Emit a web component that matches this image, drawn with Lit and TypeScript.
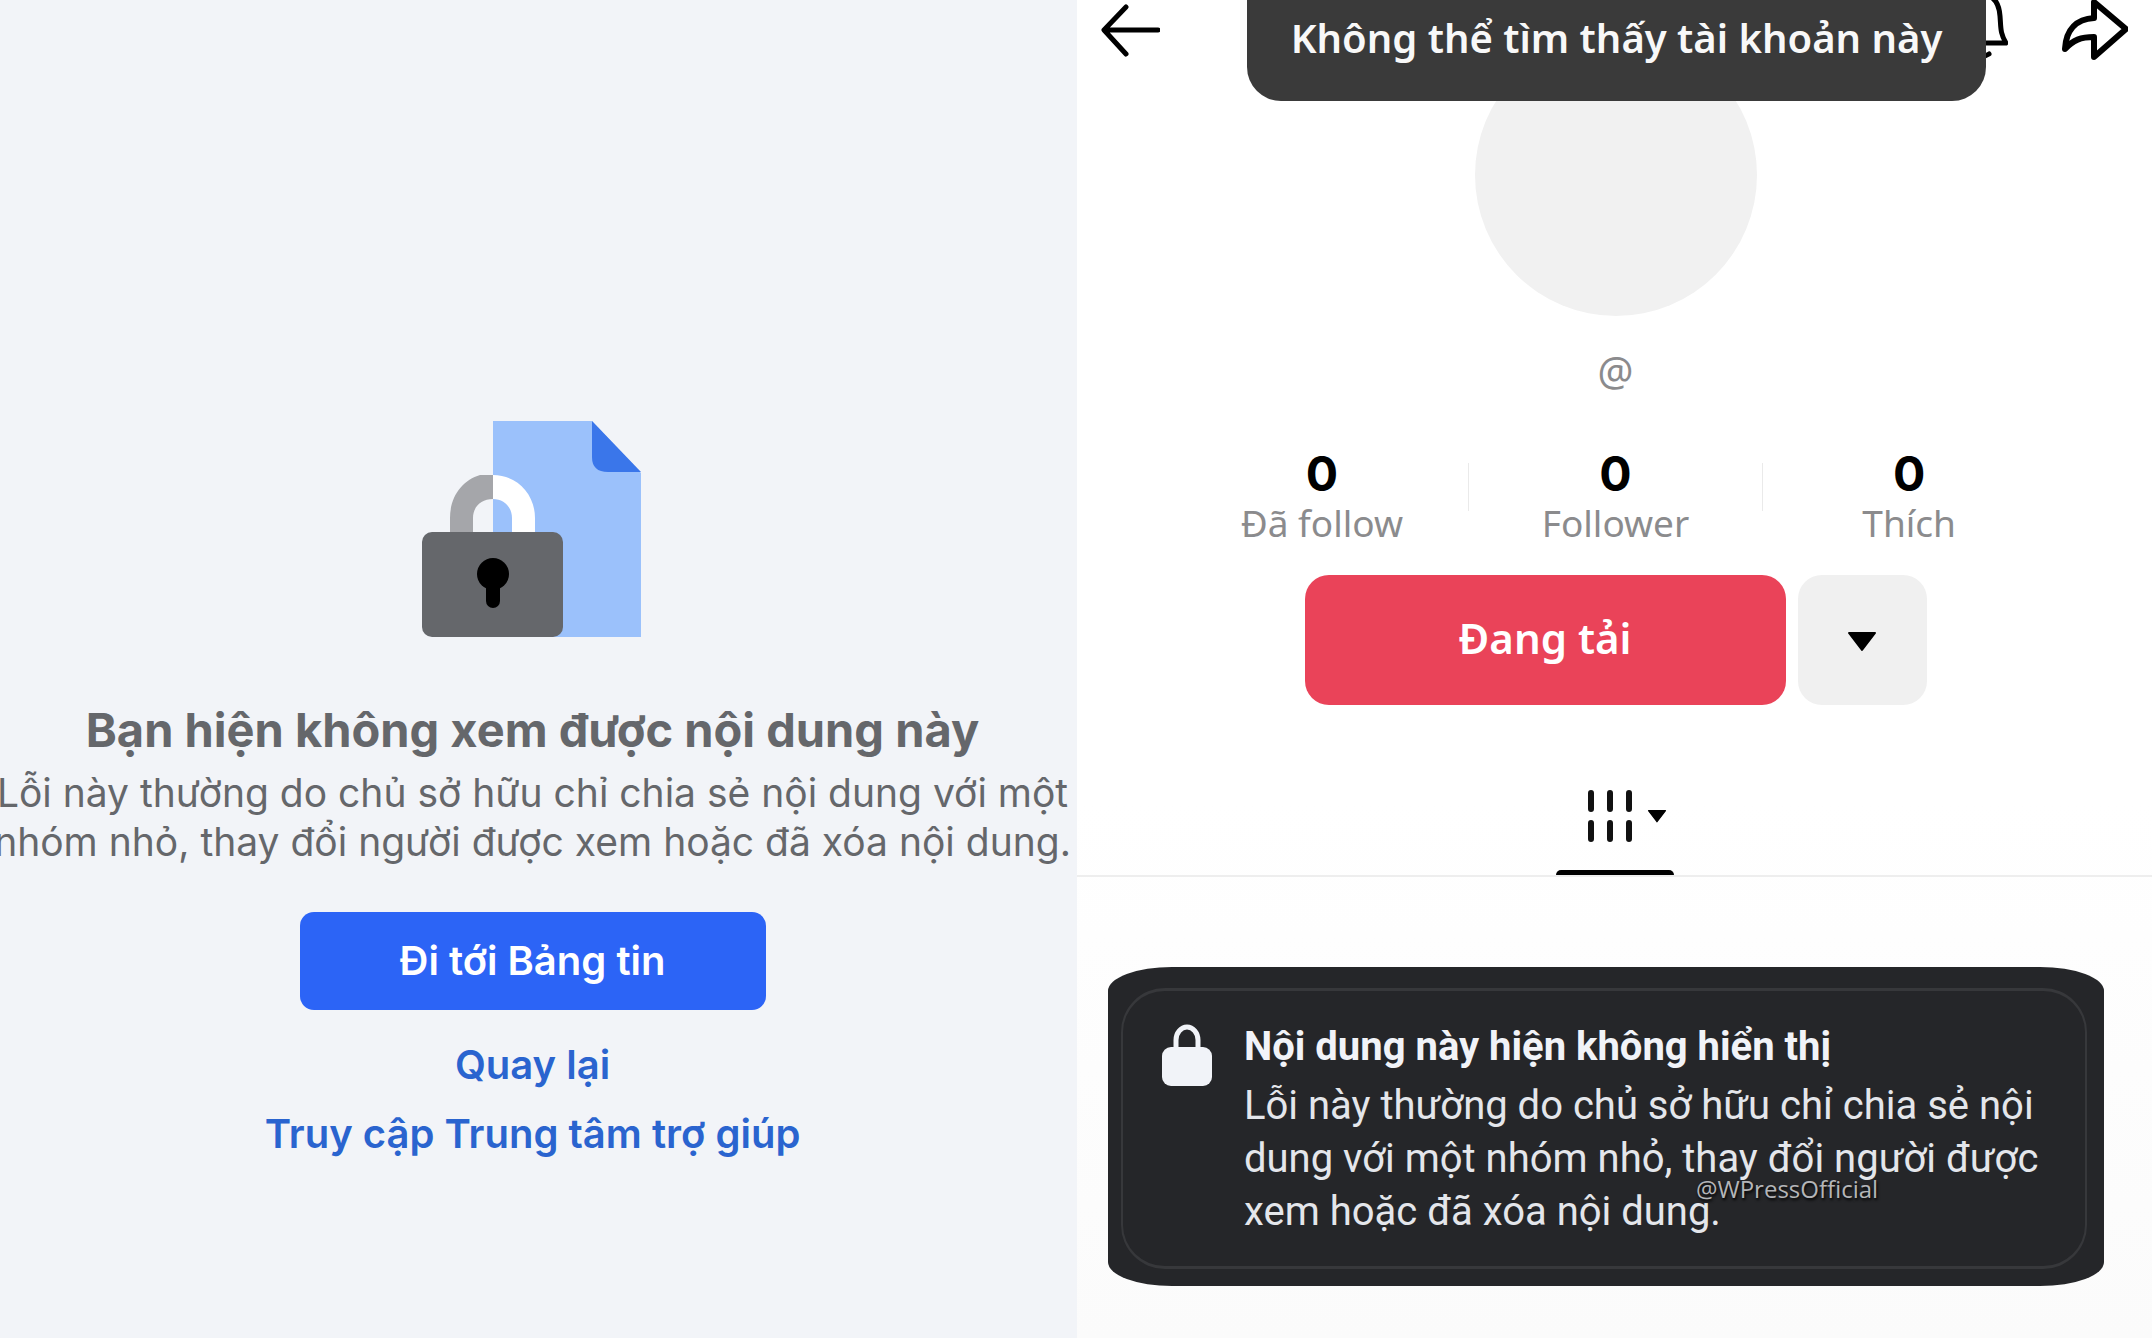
import { LitElement, html, css, svg } from "lit";
import { customElement, property } from "lit/decorators.js";

@customElement("blocked-content")
class BlockedContent extends LitElement {
  static styles = css`
    :host {
      display: flex;
      flex-direction: column;
      align-items: center;
      box-sizing: border-box;
      min-width: 0;
      padding: 420px 12px 0 0;
      overflow: hidden;
      background: #f2f4f8;
      color: #65676b;
      font-family: Inter, "Liberation Sans", sans-serif;
    }
    .art { display: block; width: 220px; height: 218px; margin-right: 4px; }
    h1 { margin: 64px 0 0; font-size: 47px; line-height: 56px; font-weight: 700; white-space: nowrap; }
    p { margin: 10px 0 0; font-size: 39px; line-height: 49px; white-space: nowrap; text-align: center; }
    .primary {
      width: 466px;
      height: 98px;
      margin-top: 46px;
      padding: 0;
      border: 0;
      border-radius: 14px;
      background: #2c64f6;
      color: #fff;
      font: 600 40px/48px Inter, "Liberation Sans", sans-serif;
    }
    nav { display: flex; flex-direction: column; align-items: center; gap: 20px; margin-top: 30px; }
    a { color: #2a64cf; font-size: 40px; line-height: 49px; font-weight: 600; text-decoration: none; white-space: nowrap; }
  `;
  render() {
    return html`
      <svg class="art" viewBox="0 0 220 218" aria-hidden="true">
        <path d="M72 1h99l49 52v164H72z" fill="#9bc1fb" />
        <path d="M171 1v36q0 15 16 15h33z" fill="#3a76ea" />
        <path d="M29 114V98C29 76 42 60 59 55h13v24C60 79 52 87 52 98v16z" fill="#a5a6aa" />
        <path d="M72 55c24 0 42 19 42 43v16H91V98c0-11-8-19-19-19z" fill="#fff" />
        <rect x="1" y="112" width="141" height="105" rx="10" fill="#65676b" />
        <circle cx="72" cy="154" r="16" />
        <rect x="65" y="160" width="14" height="28" rx="7" />
      </svg>
      <h1>Bạn hiện không xem được nội dung này</h1>
      <p>Lỗi này thường do chủ sở hữu chỉ chia sẻ nội dung với một<br />nhóm nhỏ, thay đổi người được xem hoặc đã xóa nội dung.</p>
      <button class="primary" type="button">Đi tới Bảng tin</button>
      <nav>
        <a href="#back">Quay lại</a>
        <a href="#help">Truy cập Trung tâm trợ giúp</a>
      </nav>
    `;
  }
}

@customElement("unavailable-card")
class UnavailableCard extends LitElement {
  static styles = css`
    :host {
      display: block;
      position: relative;
      box-sizing: border-box;
      padding: 21px 17px 17px 13px;
      border-radius: 64px / 24px;
      background: #252629;
      color: #e4e6eb;
      font-family: Roboto, "Liberation Sans", sans-serif;
    }
    .frame {
      display: flex;
      gap: 32px;
      padding: 32px 20px 28px 39px;
      border: solid #37383b;
      border-width: 3px 2px;
      border-radius: 44px;
    }
    .lock { flex: none; width: 50px; height: 62px; margin-top: 1px; }
    h2 { margin: 0; color: #f1f3f8; font-size: 40px; line-height: 48px; font-weight: 700; white-space: nowrap; }
    p { margin: 8px 0 0; font-size: 40px; line-height: 53px; white-space: nowrap; }
    .mark {
      position: absolute;
      top: 204px;
      left: 588px;
      color: #b4b5b8;
      font: 24px/36px "Open Sans", "Noto Sans", sans-serif;
      text-shadow: 1px 2px 3px #000;
    }
  `;
  render() {
    return html`
      <div class="frame">
        <svg class="lock" viewBox="0 0 50 62" aria-hidden="true">
          <path d="M14 26V16a11 13 0 0 1 22 0v10" fill="none" stroke="#f1f3f8" stroke-width="5" />
          <rect y="23" width="50" height="39" rx="9" fill="#f1f3f8" />
        </svg>
        <div>
          <h2>Nội dung này hiện không hiển thị</h2>
          <p>Lỗi này thường do chủ sở hữu chỉ chia sẻ nội<br />dung với một nhóm nhỏ, thay đổi người được<br />xem hoặc đã xóa nội dung.</p>
        </div>
      </div>
      <span class="mark">@WPressOfficial</span>
    `;
  }
}

@customElement("profile-stat")
class ProfileStat extends LitElement {
  @property() value = "0";
  @property() label = "";
  static styles = css`
    :host { display: flex; flex-direction: column; align-items: center; }
    strong { color: #000; font: 700 48px/48px Inter, "Liberation Sans", sans-serif; }
    span { color: #8b8b8d; font-size: 37px; line-height: 50px; white-space: nowrap; }
  `;
  render() {
    return html`<strong>${this.value}</strong><span>${this.label}</span>`;
  }
}

const caret = (cls: string) => html`
  <svg class=${cls} viewBox="0 0 30 20" aria-hidden="true">
    <path d="M2 1h26L15 18z" stroke="#000" stroke-width="2" stroke-linejoin="round" />
  </svg>
`;

@customElement("profile-page")
class ProfilePage extends LitElement {
  static styles = css`
    :host {
      display: flex;
      flex-direction: column;
      position: relative;
      min-width: 0;
      overflow: hidden;
      background: linear-gradient(#fff 60%, #fbfbfb);
      font-family: "Noto Sans", "Open Sans", sans-serif;
    }
    button { margin: 0; padding: 0; border: 0; background: none; font-family: inherit; color: #000; }
    svg { display: block; }
    header { display: flex; align-items: flex-start; height: 34px; padding: 0 24px 0 23px; }
    .icon { flex: none; height: 62px; }
    .push { margin-left: auto; margin-right: 54px; }
    .toast {
      position: absolute;
      top: 0;
      left: 170px;
      box-sizing: border-box;
      width: 739px;
      height: 101px;
      padding-top: 13px;
      border-radius: 0 0 34px 34px;
      background: #3a3a3a;
      color: #f8f8f8;
      font-size: 40px;
      line-height: 50px;
      font-weight: 600;
      text-align: center;
      white-space: nowrap;
    }
    .profile { display: flex; flex-direction: column; align-items: center; padding-left: 2px; }
    .avatar { width: 282px; height: 282px; border-radius: 50%; background: #f1f1f1; }
    .handle { margin-top: 31px; color: #8b8b8d; font-size: 40px; line-height: 48px; }
    .stats { display: grid; grid-template-columns: 1fr 1px 1fr 1px 1fr; width: 880px; margin-top: 55px; }
    .rule { height: 48px; margin-top: 13px; background: #eaeaea; }
    .actions { display: flex; gap: 12px; margin-top: 27px; }
    .follow { width: 481px; height: 130px; padding-bottom: 5px; border-radius: 24px; background: #ea4359; color: #fff; font-size: 42px; font-weight: 600; }
    .more { display: grid; place-items: center; width: 129px; padding-top: 4px; border-radius: 24px; background: #f0f0f0; }
    .caret { width: 30px; height: 20px; }
    .small { width: 20px; height: 13px; }
    .tabs { display: flex; justify-content: center; margin-top: 85px; border-bottom: 2px solid #eee; }
    .tab { display: flex; flex-direction: column; align-items: center; width: 118px; }
    .tab-icons { display: flex; align-items: center; gap: 14px; padding: 0 0 28px 24px; }
    .bar { align-self: stretch; height: 5px; border-radius: 5px 5px 0 0; background: #000; }
    unavailable-card { margin: 90px 48px 0 31px; }
  `;
  render() {
    return html`
      <header>
        <button class="icon" type="button" aria-label="Quay lại">
          <svg width="60" height="60" viewBox="0 0 60 60" fill="none" stroke="#000" stroke-width="5" stroke-linecap="round" stroke-linejoin="round">
            <path d="M58 29H5M26 6L4 29l22 24" />
          </svg>
        </button>
        <button class="icon push" type="button" aria-label="Thông báo">
          <svg width="56" height="62" viewBox="0 0 56 62" fill="none" stroke="#000" stroke-width="5" stroke-linejoin="round">
            <path d="M28-6c13 0 19 8 20 22 1 12 0 17 6 27H2c6-10 5-15 6-27C10 2 15-6 28-6z" />
            <path d="M19 54q9 6 18 0" stroke-linecap="round" />
          </svg>
        </button>
        <button class="icon" type="button" aria-label="Chia sẻ">
          <svg width="66" height="62" viewBox="0 0 66 62" fill="none" stroke="#000" stroke-width="6" stroke-linejoin="round">
            <path d="M32 2v16C15 19 4 29 3 49c8-9 16-12 29-12v20l32-28z" />
          </svg>
        </button>
      </header>
      <section class="profile">
        <div class="avatar"></div>
        <div class="handle">@</div>
        <div class="stats">
          <profile-stat label="Đã follow"></profile-stat>
          <div class="rule"></div>
          <profile-stat label="Follower"></profile-stat>
          <div class="rule"></div>
          <profile-stat label="Thích"></profile-stat>
        </div>
        <div class="actions">
          <button class="follow" type="button">Đang tải</button>
          <button class="more" type="button" aria-label="Thêm">${caret("caret")}</button>
        </div>
      </section>
      <div class="tabs">
        <button class="tab" type="button" aria-label="Video">
          <span class="tab-icons">
            <svg width="46" height="52" viewBox="0 0 46 52" stroke="#111" stroke-width="6" stroke-linecap="round">
              ${[4, 23, 42].map((x) => svg`<path d="M${x} 3v16M${x} 33v16" />`)}
            </svg>
            ${caret("small")}
          </span>
          <span class="bar"></span>
        </button>
      </div>
      <unavailable-card></unavailable-card>
      <div class="toast" role="status">Không thể tìm thấy tài khoản này</div>
    `;
  }
}

@customElement("app-root")
class AppRoot extends LitElement {
  static styles = css`
    :host { display: grid; grid-template-columns: 1077fr 1075fr; min-height: 100vh; overflow: hidden; }
  `;
  render() {
    return html`<blocked-content></blocked-content><profile-page></profile-page>`;
  }
}
